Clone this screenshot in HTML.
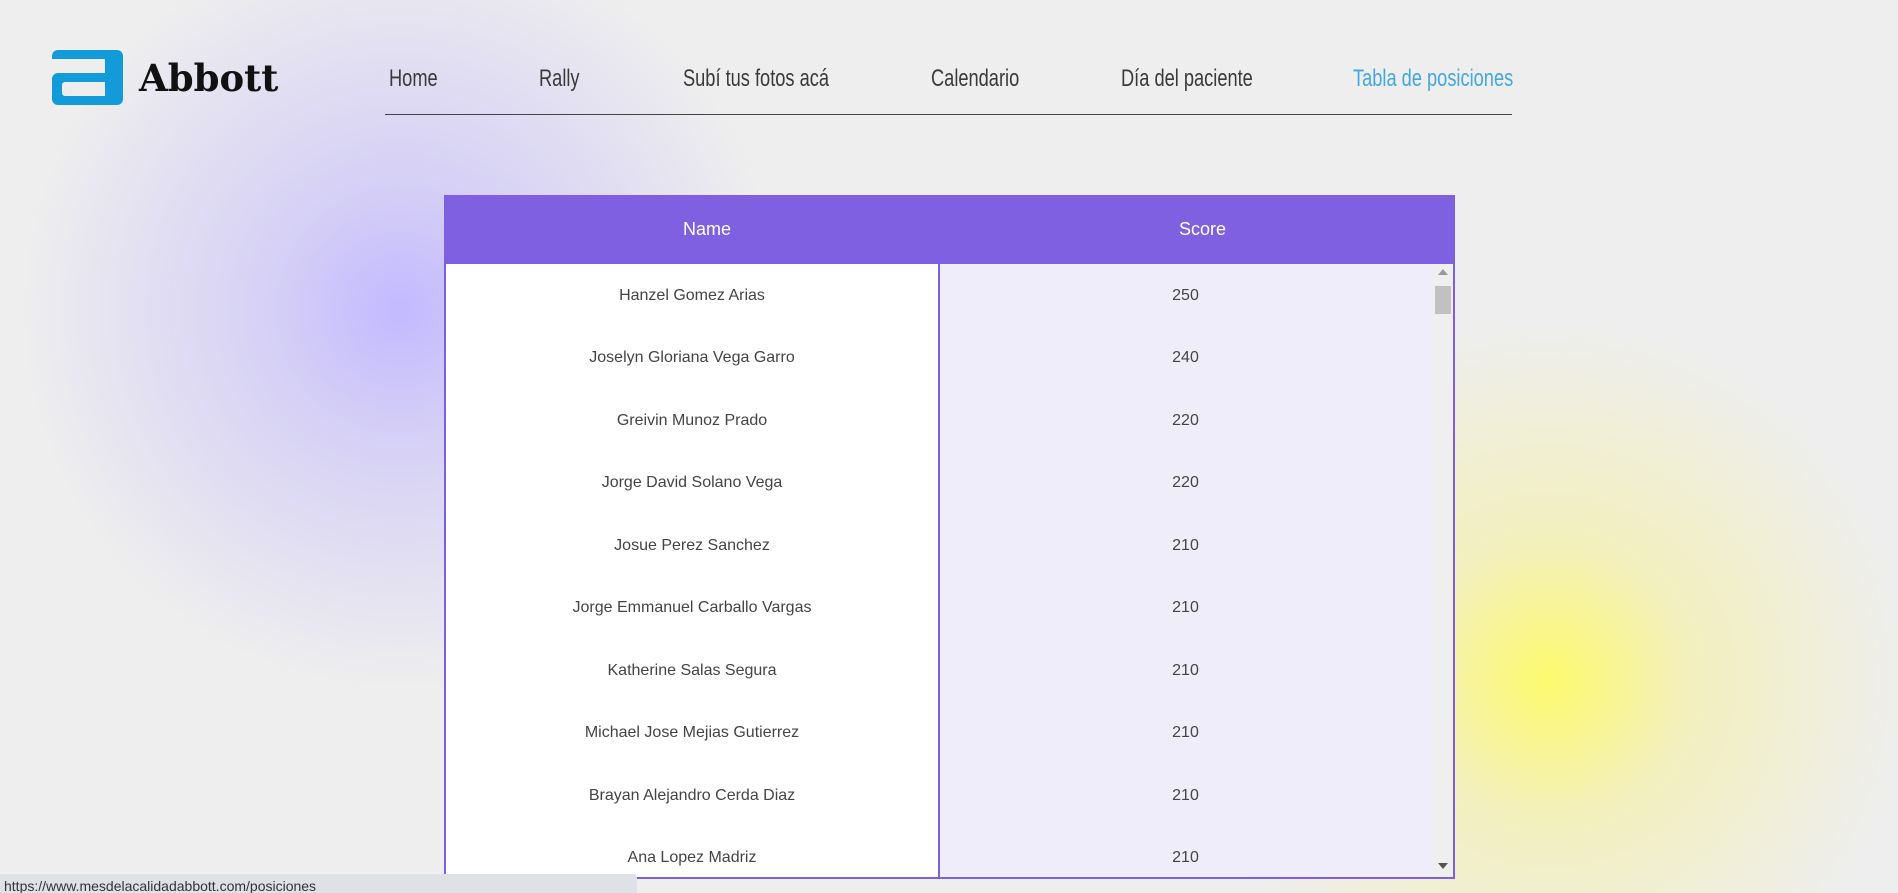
<!DOCTYPE html>
<html><head><meta charset="utf-8"><style>
html,body{margin:0;padding:0;width:1898px;height:893px;overflow:hidden;font-family:"Liberation Sans",sans-serif}
body{position:relative;background:
radial-gradient(circle at 1550px 680px, rgba(253,250,110,1) 0px, rgba(245,240,170,.7) 140px, rgba(238,238,236,0) 360px),
radial-gradient(circle at 400px 310px, rgba(195,185,255,1) 0px, rgba(205,198,248,.75) 130px, rgba(236,236,240,0) 380px),
#eeeeee}
.nav{position:absolute;top:65px;font-size:24px;color:#3a3a3a;transform:scaleX(.76);transform-origin:left;white-space:nowrap}
.ul{position:absolute;left:385px;top:114px;width:1127px;height:1px;background:#444}
.tbl{position:absolute;left:444px;top:195px;width:1007px;height:681px;border:2px solid #7e5fe0;border-top:1px solid #7e5fe0;background:#fff;overflow:hidden}
.hd{position:absolute;left:0;top:0;width:100%;height:68px;background:#7e60e0;color:#fff;font-size:18px}
.hd span{position:absolute;top:23px}
.rc{position:absolute;left:492px;top:68px;width:515px;height:613px;background:#efedfa;border-left:2px solid #7e5fe0}
.row{position:absolute;font-size:16px;color:#444;text-align:center;margin-top:2px}
.sb{position:absolute;left:987px;top:68px;width:20px;height:613px;background:#efefef}
</style></head><body>
<svg style="position:absolute;left:52px;top:50px" width="71" height="55" viewBox="0 0 71 55"><path d="M6 0 H65 A6 6 0 0 1 71 6 V49 A6 6 0 0 1 65 55 H6 A6 6 0 0 1 0 49 V29 A6 6 0 0 1 6 23 H53 V9 H0 V6 A6 6 0 0 1 6 0 Z M13 32 A3 3 0 0 0 10 35 V43 A3 3 0 0 0 13 46 H53 V32 Z" fill="#139bd9" fill-rule="evenodd"/></svg>
<div style="position:absolute;left:139px;top:56px;font-family:'DejaVu Serif',serif;font-weight:bold;font-size:37px;color:#111">Abbott</div>
<div class="nav" style="left:389px">Home</div>
<div class="nav" style="left:539px">Rally</div>
<div class="nav" style="left:683px">Subí tus fotos acá</div>
<div class="nav" style="left:931px">Calendario</div>
<div class="nav" style="left:1121px">Día del paciente</div>
<div class="nav" style="left:1353px;color:#45a7e0">Tabla de posiciones</div>
<div class="ul"></div>
<div class="tbl">
<div class="hd"><span style="left:237px">Name</span><span style="left:733px">Score</span></div>
<div class="rc"></div>
<div class="sb"><div style="position:absolute;left:5px;top:5px;border:5px solid transparent;border-bottom:6px solid #999;border-top:0"></div><div style="position:absolute;left:2px;top:22px;width:16px;height:28px;background:#c1c1c1"></div><div style="position:absolute;left:5px;bottom:8px;border:5px solid transparent;border-top:6px solid #555;border-bottom:0"></div></div>
<div class="row" style="left:0;width:492px;top:89px">Hanzel Gomez Arias</div><div class="row" style="left:492px;width:495px;top:89px">250</div>
<div class="row" style="left:0;width:492px;top:151px">Joselyn Gloriana Vega Garro</div><div class="row" style="left:492px;width:495px;top:151px">240</div>
<div class="row" style="left:0;width:492px;top:214px">Greivin Munoz Prado</div><div class="row" style="left:492px;width:495px;top:214px">220</div>
<div class="row" style="left:0;width:492px;top:276px">Jorge David Solano Vega</div><div class="row" style="left:492px;width:495px;top:276px">220</div>
<div class="row" style="left:0;width:492px;top:339px">Josue Perez Sanchez</div><div class="row" style="left:492px;width:495px;top:339px">210</div>
<div class="row" style="left:0;width:492px;top:401px">Jorge Emmanuel Carballo Vargas</div><div class="row" style="left:492px;width:495px;top:401px">210</div>
<div class="row" style="left:0;width:492px;top:464px">Katherine Salas Segura</div><div class="row" style="left:492px;width:495px;top:464px">210</div>
<div class="row" style="left:0;width:492px;top:526px">Michael Jose Mejias Gutierrez</div><div class="row" style="left:492px;width:495px;top:526px">210</div>
<div class="row" style="left:0;width:492px;top:589px">Brayan Alejandro Cerda Diaz</div><div class="row" style="left:492px;width:495px;top:589px">210</div>
<div class="row" style="left:0;width:492px;top:651px">Ana Lopez Madriz</div><div class="row" style="left:492px;width:495px;top:651px">210</div>
</div>
<div style="position:absolute;left:0;top:874px;width:637px;height:19px;background:#dee1e6;border-top-right-radius:4px;font-size:14px;color:#333;padding-left:4px;line-height:24px;box-sizing:border-box;overflow:hidden">https://www.mesdelacalidadabbott.com/posiciones</div>
</body></html>
